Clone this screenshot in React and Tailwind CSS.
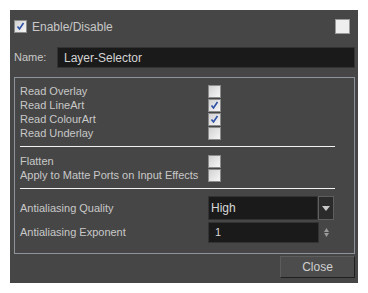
import React from "react";

function Check({ on }) {
  return (
    <div className="w-[13px] h-[13px] border border-[#8c8c8c] bg-gradient-to-br from-[#d2d2d2] to-[#f6f6f6] flex items-center justify-center shrink-0">
      {on && (
        <svg width="9" height="9" viewBox="0 0 9 9">
          <path d="M1.5 4.5 L3.5 7 L7.5 1" fill="none" stroke="#2c4fa8" strokeWidth="1.6" />
        </svg>
      )}
    </div>
  );
}

function Row({ label, on }) {
  return (
    <div className="flex items-center h-[14px]">
      <span className="w-[188px] shrink-0">{label}</span>
      <Check on={on} />
    </div>
  );
}

export default function App() {
  return (
    <div className="w-[368px] h-[293px] bg-white pt-[10px] pl-[10px]" style={{ fontFamily: '"Liberation Sans", Arial, sans-serif' }}>
      <div className="w-[348px] h-[273px] bg-[#464646] text-[#c8c8c8] text-[11px] pt-[9px] pl-[4px] pr-[3px]">
        <div className="flex items-center justify-between h-[15px]">
          <div className="flex items-center gap-[5px]">
            <Check on />
            <span className="text-[12px]">Enable/Disable</span>
          </div>
          <div className="w-[15px] h-[15px] mr-[5px] bg-[#eeeeee] border border-[#9a9a9a]" />
        </div>

        <div className="flex items-center mt-[13px] h-[21px]">
          <span className="w-[43px] text-[11px]">Name:</span>
          <div className="flex-1 h-full bg-[#1a1a1a] border border-[#333] flex items-center pl-[6px] text-[12px] text-[#d4d4d4]">
            Layer-Selector
          </div>
        </div>

        <div className="mt-[9px] h-[177px] border border-[#8d949b] pl-[5px] pt-[6px]">
          <Row label="Read Overlay" />
          <Row label="Read LineArt" on />
          <Row label="Read ColourArt" on />
          <Row label="Read Underlay" />
          <div className="mt-[6px] w-[315px] h-px bg-[#f2f2f2]" />
          <div className="mt-[7px]">
            <Row label="Flatten" />
            <Row label="Apply to Matte Ports on Input Effects" />
          </div>
          <div className="mt-[6px] w-[315px] h-px bg-[#f2f2f2]" />

          <div className="mt-[7px] flex items-center h-[24px]">
            <span className="w-[188px] shrink-0">Antialiasing Quality</span>
            <div className="flex h-full">
              <div className="w-[110px] h-full bg-[#1a1a1a] border border-[#333] flex items-center pl-[2px] text-[12px] text-[#d8d8d8]">High</div>
              <div className="w-[16px] h-full bg-[#2b2b2b] border border-[#5e5e5e] flex items-center justify-center">
                <svg width="8" height="5" viewBox="0 0 8 5">
                  <path d="M0 0 H8 L4 5 Z" fill="#c8c8c8" />
                </svg>
              </div>
            </div>
          </div>
          <div className="mt-[2px] flex items-center h-[21px]">
            <span className="w-[188px] shrink-0">Antialiasing Exponent</span>
            <div className="w-[111px] h-full bg-[#1a1a1a] border border-[#333] flex items-center pl-[6px] text-[11px] text-[#d8d8d8]">1</div>
            <svg className="ml-[5px]" width="5" height="9" viewBox="0 0 5 9">
              <path d="M0 4 L2.5 0 L5 4 Z M0 5 L2.5 9 L5 5 Z" fill="#9a9a9a" />
            </svg>
          </div>
        </div>

        <div className="flex justify-end mt-[2px]">
          <button className="w-[75px] h-[22px] bg-[#4c4c4c] border border-t-[#5c5c5c] border-l-[#5c5c5c] border-r-[#202020] border-b-[#202020] text-[12px] text-[#d0d0d0]">
            Close
          </button>
        </div>
      </div>
    </div>
  );
}
